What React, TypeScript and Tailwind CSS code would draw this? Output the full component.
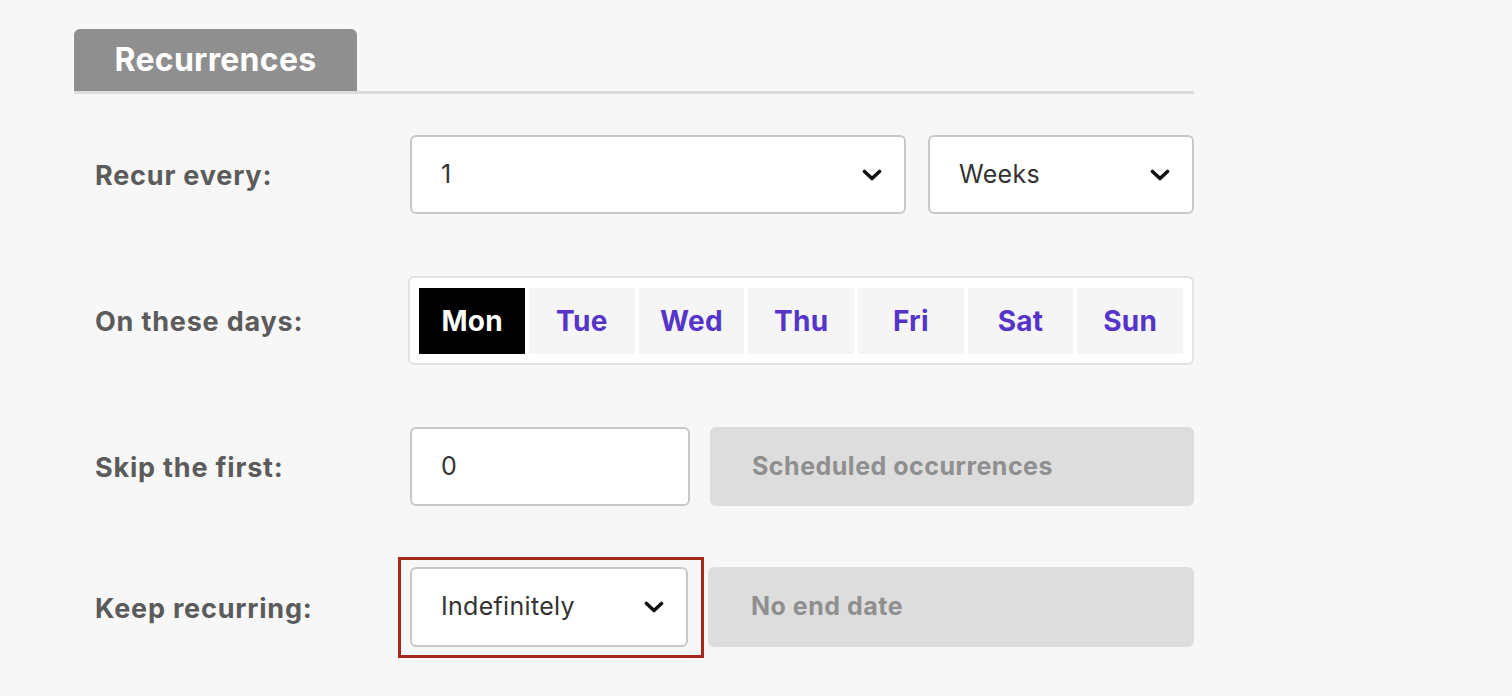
import React from 'react';

const DAYS = ['Mon', 'Tue', 'Wed', 'Thu', 'Fri', 'Sat', 'Sun'];

const Chevron: React.FC = () => (
  <svg width="20" height="14" viewBox="0 0 20 14" fill="none" className="shrink-0">
    <path d="M2.5 3.5 10 10.5 17.5 3.5" stroke="#111" strokeWidth="3.6" strokeLinecap="round" strokeLinejoin="round" />
  </svg>
);

const Select: React.FC<{ value: string; className?: string }> = ({ value, className }) => (
  <div
    className={`h-[79px] flex items-center justify-between bg-white border-2 border-[#c8c8c8] rounded-md pl-[29px] pr-[22px] text-[25px] tracking-[0.3px] text-[#333] ${className ?? ''}`}
  >
    <span>{value}</span>
    <Chevron />
  </div>
);

const Label: React.FC<{ children: React.ReactNode }> = ({ children }) => (
  <div className="w-[336px] pl-[21px] pt-[4px] text-[27px] tracking-[0.8px] font-bold text-[#5b5b5b]">{children}</div>
);

const App: React.FC = () => {
  return (
    <div
      className="min-h-screen bg-[#f7f7f7] pt-[29px] pl-[74px]"
      style={{ fontFamily: 'Inter, Lato, sans-serif' }}
    >
      <div className="w-[1120px]">
        {/* Tab header */}
        <div className="border-b-[3px] border-[#dcdcdc]">
          <div className="w-[283px] h-[62px] bg-[#8f8f8f] rounded-t-md flex items-center justify-center text-white text-[32px] tracking-[0.3px] font-bold">
            Recurrences
          </div>
        </div>

        {/* Recur every */}
        <div className="flex items-center mt-[41px]">
          <Label>Recur every:</Label>
          <Select value="1" className="w-[496px]" />
          <Select value="Weeks" className="w-[266px] ml-[22px]" />
        </div>

        {/* On these days */}
        <div className="flex items-center mt-[62px]">
          <Label>On these days:</Label>
          <div className="w-[787px] -ml-px bg-white border-2 border-[#e2e2e2] rounded-md px-[9px] pt-[10px] pb-[9px] flex gap-[4px]">
            {DAYS.map((day) => (
              <button
                key={day}
                className={`flex-1 h-[66px] flex items-center justify-center text-[28px] tracking-[0.3px] font-bold ${
                  day === 'Mon' ? 'bg-black text-white' : 'bg-[#f5f5f5] text-[#5534c9]'
                }`}
              >
                {day}
              </button>
            ))}
          </div>
        </div>

        {/* Skip the first */}
        <div className="flex items-center mt-[62px]">
          <Label>Skip the first:</Label>
          <div className="w-[280px] h-[79px] flex items-center bg-white border-2 border-[#c8c8c8] rounded-md pl-[29px] text-[25px] text-[#333]">
            0
          </div>
          <div className="w-[484px] h-[79px] ml-[20px] flex items-center bg-[#dddddd] rounded-md pl-[42px] text-[25px] tracking-[0.5px] font-bold text-[#8f8f8f]">
            Scheduled occurrences
          </div>
        </div>

        {/* Keep recurring */}
        <div className="flex items-center mt-[61px]">
          <Label>Keep recurring:</Label>
          <div className="relative">
            <Select value="Indefinitely" className="w-[278px] h-[80px]" />
            <div className="absolute -left-[12px] -top-[10px] -right-[16px] -bottom-[11px] border-[3px] border-[#a5291b] pointer-events-none" />
          </div>
          <div className="w-[486px] h-[80px] ml-[20px] flex items-center bg-[#dddddd] rounded-md pl-[43px] text-[25px] tracking-[0.5px] font-bold text-[#8f8f8f]">
            No end date
          </div>
        </div>
      </div>
    </div>
  );
};

export default App;
